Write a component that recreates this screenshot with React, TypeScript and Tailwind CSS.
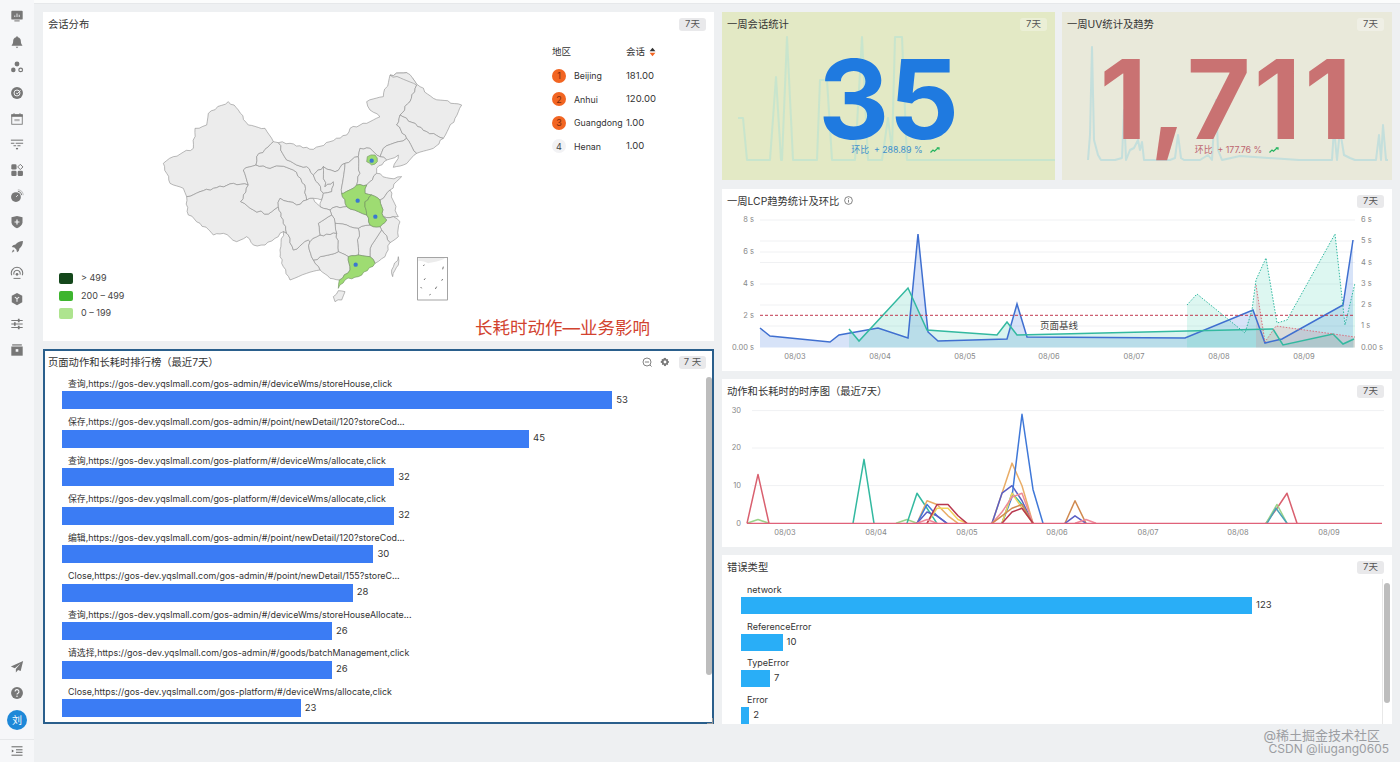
import type { ReactNode } from "react";

const provinces = [
  "40,310 70,290 130,265 135,205 170,195 175,160 235,125 265,150 295,195 345,205 370,245 345,268 320,290 318,315 280,330 295,375 250,370 190,385 150,395 110,410 100,385 60,370 50,340",
  "110,410 150,395 190,385 250,370 295,375 272,425 310,450 355,462 385,440 410,520 400,515 375,535 345,555 310,555 290,530 260,545 220,520 190,525 150,490 115,465",
  "280,330 318,315 360,325 390,318 430,330 465,375 470,420 440,435 415,425 390,415 385,440 355,462 310,450 272,425 295,375",
  "370,245 385,248 410,300 440,315 470,320 490,345 505,370 520,400 515,420 490,415 470,420 465,375 430,330 390,318 360,325 318,315 320,290 345,268",
  "385,248 420,250 490,268 540,245 590,225 600,205 650,190 690,170 660,150 650,125 700,110 720,45 770,38 800,75 780,125 750,165 740,195 770,235 745,245 700,265 690,290 660,265 630,265 625,290 585,310 555,335 520,320 490,345 470,320 440,315 410,300",
  "720,45 770,38 810,80 850,115 935,135 915,175 880,235 830,215 750,165 780,125 800,75",
  "750,165 830,215 880,235 850,265 800,280 770,235 740,195",
  "770,235 800,280 760,315 730,322 745,285 710,300 690,290 700,265 745,245",
  "490,345 520,320 525,380 550,365 545,395 520,400 505,370",
  "520,320 555,335 585,310 575,400 590,440 560,440 540,450 510,440 515,420 520,400 545,395 550,365 525,380",
  "585,310 625,290 630,340 620,375 580,400 575,400",
  "625,290 630,265 660,265 690,290 710,300 680,325 680,340 650,375 620,375 630,340",
  "650,375 680,340 720,355 755,350 720,390 700,415 690,420 665,405 645,400",
  "700,415 720,390 745,470 730,470 700,470 690,420",
  "700,470 730,470 750,485 745,530 720,548 695,510 690,500 710,480",
  "695,510 720,548 705,590 675,610 660,590 665,555",
  "625,505 660,495 690,500 695,510 665,555 660,590 625,585",
  "540,450 560,440 590,440 625,455 650,465 660,495 625,505 590,495 555,490 545,465",
  "555,490 590,495 625,505 625,585 595,590 565,575 560,520",
  "490,600 565,575 595,590 600,630 568,660 540,655 510,630",
  "550,710 565,692 585,695 575,720 555,725",
  "400,515 410,520 415,525 430,570 475,540 480,545 478,570 490,600 510,630 470,640 445,650 420,660 395,610 390,570",
  "480,545 510,525 560,520 565,575 490,600 478,570",
  "505,490 545,465 555,490 560,520 510,525",
  "385,440 390,415 415,425 440,435 470,420 490,415 510,440 540,450 545,465 505,490 510,525 480,545 475,540 430,570 415,525 410,520",
  "745,590 725,630 728,650 745,615",
];

const greenProvinces = [
  "652,290 675,285 682,305 665,315 650,305",
  "620,375 650,375 645,400 665,405 645,425 645,440 650,465 625,455 590,440 575,400 580,400",
  "665,405 690,420 700,470 710,480 690,500 660,495 650,465 645,440 645,425",
  "595,590 625,585 660,590 675,610 625,650 585,660 565,685 568,660 600,630",
];

// rough up the straight edges; same noise on both sides of a shared border
function wiggle(points: string) {
  const pts = points.split(" ").map((p) => p.split(",").map(Number));
  const out: string[] = [];
  pts.forEach((p, i) => {
    const q = pts[(i + 1) % pts.length];
    const swapped = p[0] > q[0] || (p[0] === q[0] && p[1] > q[1]);
    const [a, b] = swapped ? [q, p] : [p, q];
    const dx = b[0] - a[0];
    const dy = b[1] - a[1];
    const len = Math.hypot(dx, dy);
    const n = Math.max(1, Math.round(len / 11));
    const mids: string[] = [];
    for (let k = 1; k < n; k++) {
      const noise = Math.sin(a[0] * 12.9 + a[1] * 78.2 + b[0] * 3.7 + k * 37.7) * 43758.5;
      const off = (noise - Math.floor(noise) - 0.5) * 7;
      const t = k / n;
      mids.push(`${(a[0] + dx * t - (dy / len) * off).toFixed(1)},${(a[1] + dy * t + (dx / len) * off).toFixed(1)}`);
    }
    out.push(`${p[0]},${p[1]}`, ...(swapped ? mids.reverse() : mids));
  });
  return out.join(" ");
}

const rankRows = [
  { name: "Beijing", value: "181.00" },
  { name: "Anhui", value: "120.00" },
  { name: "Guangdong", value: "1.00" },
  { name: "Henan", value: "1.00" },
];

const actionRows = [
  { label: "查询,https://gos-dev.yqslmall.com/gos-admin/#/deviceWms/storeHouse,click", value: 53 },
  { label: "保存,https://gos-dev.yqslmall.com/gos-admin/#/point/newDetail/120?storeCod...", value: 45 },
  { label: "查询,https://gos-dev.yqslmall.com/gos-platform/#/deviceWms/allocate,click", value: 32 },
  { label: "保存,https://gos-dev.yqslmall.com/gos-platform/#/deviceWms/allocate,click", value: 32 },
  { label: "编辑,https://gos-dev.yqslmall.com/gos-admin/#/point/newDetail/120?storeCod...", value: 30 },
  { label: "Close,https://gos-dev.yqslmall.com/gos-admin/#/point/newDetail/155?storeC...", value: 28 },
  { label: "查询,https://gos-dev.yqslmall.com/gos-admin/#/deviceWms/storeHouseAllocate...", value: 26 },
  { label: "请选择,https://gos-dev.yqslmall.com/gos-admin/#/goods/batchManagement,click", value: 26 },
  { label: "Close,https://gos-dev.yqslmall.com/gos-platform/#/deviceWms/allocate,click", value: 23 },
];

const errorRows = [
  { label: "network", value: 123 },
  { label: "ReferenceError", value: 10 },
  { label: "TypeError", value: 7 },
  { label: "Error", value: 2 },
];

const sessionSpark =
  "738,118 743,118 747,160 770,160 776,77 781,160 782,160 787,37 793,160 817,160 820,80 827,80 832,160 855,160 862,37 868,160 882,160 888,118 892,150 895,37 902,37 907,160 1055,160";
const uvSpark =
  "1088,160 1090,135 1092,47 1094,140 1098,155 1101,160 1115,160 1122,158 1124,110 1126,160 1130,150 1134,148 1138,140 1140,150 1142,142 1144,160 1170,160 1175,158 1178,135 1181,158 1184,160 1200,160 1208,155 1212,160 1214,125 1216,100 1218,150 1222,160 1240,156 1299,160 1332,160 1334,128 1337,160 1340,130 1344,155 1350,158 1355,160 1376,160 1379,135 1381,160 1383,125 1386,160 1388,160";

const lcpBlue = "760,328 770,336 830,342 839,335 878,328 908,338 918,234 928,332 938,341 1007,339 1017,304 1027,337 1185,338 1253,310 1265,343 1282,339 1343,305 1353,240";
const lcpTeal = "849,329 859,341 908,288 927,330 997,335 1007,322 1017,335 1060,334 1273,329 1283,345 1333,334 1343,344 1354,339";
const lcpTealDot = "1187,305 1197,294 1245,333 1252,310 1256,280 1266,258 1277,323 1287,320 1335,234 1345,325 1355,283";
const lcpRedDot = "1256,285 1265,342 1276,326 1355,337";

const seqSeries: { color: string; points: [number, number][] }[] = [
  { color: "#9ad48a", points: [[747, 0], [758, 1], [769, 0]] },
  { color: "#d9606f", points: [[747, 0], [758, 13], [769, 0]] },
  { color: "#33b9a0", points: [[853, 0], [864, 17], [874, 0]] },
  { color: "#9ad48a", points: [[896, 0], [907, 1], [917, 0]] },
  { color: "#33b9a0", points: [[907, 0], [917, 8], [927, 4], [937, 0]] },
  { color: "#e9ad67", points: [[917, 0], [927, 6], [937, 5], [948, 2], [958, 0]] },
  { color: "#3f78d8", points: [[917, 0], [927, 5], [937, 2], [947, 0]] },
  { color: "#5a5fc4", points: [[917, 0], [927, 3], [937, 2], [947, 0]] },
  { color: "#f2d35c", points: [[927, 0], [937, 4], [948, 4], [958, 1], [967, 0]] },
  { color: "#b8384f", points: [[927, 0], [937, 5], [948, 5], [958, 2], [967, 0]] },
  { color: "#ee8a9a", points: [[917, 0], [927, 1], [937, 0]] },
  { color: "#e9ad67", points: [[992, 0], [1002, 8], [1012, 16], [1022, 10], [1033, 0]] },
  { color: "#5a5fc4", points: [[992, 0], [1002, 8], [1012, 10], [1022, 6], [1033, 0]] },
  { color: "#3f78d8", points: [[1002, 0], [1012, 7], [1022, 29], [1033, 9], [1043, 0]] },
  { color: "#33b9a0", points: [[1002, 0], [1012, 8], [1022, 5], [1033, 0]] },
  { color: "#f2d35c", points: [[1002, 0], [1012, 8], [1022, 4], [1033, 0]] },
  { color: "#ee8a9a", points: [[992, 0], [1002, 3], [1012, 7], [1022, 8], [1033, 0]] },
  { color: "#d08a50", points: [[992, 0], [1002, 2], [1012, 4], [1022, 5], [1033, 0]] },
  { color: "#b8384f", points: [[1002, 0], [1012, 3], [1022, 4], [1033, 0]] },
  { color: "#d08a50", points: [[1065, 0], [1075, 6], [1086, 0]] },
  { color: "#5a5fc4", points: [[1065, 0], [1075, 2], [1086, 0]] },
  { color: "#ee8a9a", points: [[1075, 0], [1086, 1], [1096, 0]] },
  { color: "#d9606f", points: [[1266, 0], [1277, 4], [1287, 8], [1297, 0]] },
  { color: "#9ad48a", points: [[1266, 0], [1277, 5], [1287, 0]] },
  { color: "#4aa3b8", points: [[1267, 0], [1276, 4], [1287, 0]] },
];

function SideIcon({ children }: { children: ReactNode }) {
  return (
    <svg viewBox="0 0 16 16" className="h-[14px] w-[14px] text-[#777]" fill="currentColor">
      {children}
    </svg>
  );
}

const topIcons = [
  <>
    <rect x="1.5" y="2" width="13" height="10" rx="1" />
    <rect x="5" y="13" width="6" height="1.2" />
    <path d="M5 9V7.5h1V9zM7.5 9V5h1v4zM10 9V6.5h1V9z" fill="#f4f5f7" />
  </>,
  <path d="M8 1.5a1 1 0 0 1 1 1c2.3.5 3.4 2.3 3.4 4.6 0 2 .6 3.4 1.6 4.4v.8H2v-.8c1-1 1.6-2.4 1.6-4.4C3.6 4.8 4.7 3 7 2.5a1 1 0 0 1 1-1zM6.5 13.500h3L8 15z" />,
  <>
    <circle cx="8" cy="4.5" r="2.8" />
    <circle cx="3.8" cy="11.3" r="2.6" />
    <circle cx="12.2" cy="11.3" r="2.1" fill="none" stroke="currentColor" strokeWidth="1.4" />
  </>,
  <>
    <circle cx="8" cy="8" r="6.8" />
    <circle cx="8" cy="8" r="3.4" fill="none" stroke="#f4f5f7" strokeWidth="1.1" />
    <path d="M7 8l1.2 1L12 5" fill="none" stroke="#f4f5f7" strokeWidth="1.1" />
  </>,
  <>
    <path d="M1.5 3h13v2.5h-13z" />
    <path d="M4 1.500h1.200V3H4zM10.800 1.500H12V3h-1.200z" />
    <rect x="2" y="3" width="12" height="11" fill="none" stroke="currentColor" strokeWidth="1" />
    <rect x="5" y="8" width="6" height="2.5" opacity=".5" />
  </>,
  <>
    <rect x="1" y="3" width="14" height="1.2" />
    <path d="M1 6.500h4v1.100H1zM6.500 6.500H15v1.100H6.500z" />
    <path d="M4 9.500h3v1.100H4zM8.500 9.500H12v1.100H8.500z" />
    <rect x="6.800" y="12.5" width="2.4" height="1.6" />
  </>,
  <>
    <rect x="1.5" y="1.5" width="6" height="6" rx="1.5" />
    <rect x="1.5" y="8.8" width="6" height="6" rx="1.5" />
    <rect x="8.8" y="8.8" width="6" height="6" rx="1.5" />
    <path d="M11.8 1.500l3 3-3 3-3-3z" fill="none" stroke="currentColor" strokeWidth="1.1" />
  </>,
  <>
    <circle cx="6.8" cy="9.2" r="5.6" />
    <path d="M7 9l2-2" stroke="#f4f5f7" strokeWidth="1" />
    <path d="M9 2.500a5 5 0 0 1 4.500 4.500" fill="none" stroke="currentColor" strokeWidth="1.100" />
    <path d="M9 .8a6.800 6.800 0 0 1 6.200 6.200" fill="none" stroke="currentColor" strokeWidth=".8" opacity=".6" />
  </>,
  <>
    <path d="M8 1l6.300 1.700v5.600c0 3.200-2.900 5.500-6.300 6.700-3.400-1.200-6.300-3.500-6.300-6.700V2.700z" />
    <path d="M7.300 5.200h1.400v2.100h2.100v1.400H8.700v2.100H7.300V8.700H5.200V7.300h2.100z" fill="#f4f5f7" />
  </>,
  <>
    <path d="M14.800 1.200c-3.600.1-6.400 1.300-8.500 4L3.500 6 2 8l3 .6 2.400 2.400.6 3 2-1.500.8-2.800c2.700-2.100 3.900-4.900 4-8.500z" />
    <path d="M3.500 10.800l1.700 1.700L2 14.500z" />
  </>,
  <>
    <path d="M2 10.500a6.500 6.500 0 1 1 12 0" fill="none" stroke="currentColor" strokeWidth="1.2" />
    <path d="M4.500 9.800a3.700 3.700 0 1 1 7 0" fill="none" stroke="currentColor" strokeWidth="1.2" />
    <circle cx="8" cy="9.5" r="1.5" />
    <path d="M4 13.600h8v1.100H4z" />
  </>,
  <>
    <path d="M8 1l6 3.300v7.400L8 15l-6-3.300V4.300z" />
    <path d="M5.500 5.800L8 7.500l2.500-1.700M8 7.500V11" fill="none" stroke="#f4f5f7" strokeWidth="1.2" />
  </>,
  <>
    <path d="M1.500 3.500h13v1.100h-13zM1.500 7.500h13v1.100h-13zM1.500 11.500h13v1.100h-13z" />
    <rect x="9" y="2" width="2" height="4" />
    <rect x="4.5" y="6" width="2" height="4" />
    <rect x="9" y="10" width="2" height="4" />
  </>,
  <>
    <rect x="2.5" y="1.5" width="11" height="1.4" />
    <path d="M1.500 4h13v10.500h-13z" />
    <rect x="6.5" y="7" width="3" height="3" fill="#f4f5f7" />
  </>,
];

function TimeTag({ label = "7天", className = "bg-[#e9e9eb]" }: { label?: string; className?: string }) {
  return (
    <span className={`flex h-[13px] w-[27px] items-center justify-center rounded-[3px] text-[9.5px] leading-none text-[#555] ${className}`}>
      {label}
    </span>
  );
}

function CardHeader({
  title,
  extra,
  tag,
  tagClass,
  boxed,
}: {
  title: ReactNode;
  extra?: ReactNode;
  tag?: string;
  tagClass?: string;
  boxed?: boolean;
}) {
  return (
    <div className={`flex shrink-0 items-center justify-between ${boxed ? "h-[22px] pl-[3px] pr-[6px]" : "h-[24px] pl-[5px] pr-[8px]"}`}>
      <span className="text-[10.3px] leading-none text-[#333]">{title}</span>
      <div className="flex items-center gap-[5px]">
        {extra}
        <TimeTag label={tag} className={tagClass} />
      </div>
    </div>
  );
}

function Scrollbar({ height, className }: { height: number; className?: string }) {
  return (
    <div className={`w-[6px] shrink-0 ${className ?? ""}`}>
      <div className="w-[6px] rounded-[3px] bg-[#bdbdbd]" style={{ height }} />
    </div>
  );
}

function TrendIcon() {
  return (
    <svg viewBox="0 0 10 6" className="h-[6px] w-[10px]" fill="none" stroke="#22b35e" strokeWidth="1.2">
      <path d="M.5 5.500L3 3l1.500 1.200L8 1M6.800.8H9v2" />
    </svg>
  );
}

function StatCard({
  title,
  value,
  ratio,
  spark,
  bg,
  numClass,
  ratioClass,
  viewBox,
  sparkColor,
}: {
  title: string;
  value: string;
  ratio: string;
  spark: string;
  bg: string;
  numClass: string;
  ratioClass: string;
  viewBox: string;
  sparkColor: string;
}) {
  return (
    <div className={`relative flex flex-col overflow-hidden ${bg}`}>
      <svg viewBox={viewBox} className="absolute inset-0 h-full w-full" fill="none">
        <polyline points={spark} stroke={sparkColor} strokeWidth="2" strokeLinejoin="round" opacity=".75" />
      </svg>
      <div className="relative flex h-full flex-col">
        <CardHeader title={title} tagClass="bg-white/30" />
        <div className={`mt-[18px] h-[90px] text-center text-[110px] font-bold leading-[90px] ${numClass}`}>{value}</div>
        <div className={`mt-[1px] flex items-center justify-center gap-[7px] text-[8.8px] leading-[10px] ${ratioClass}`}>
          <span>环比&nbsp;&nbsp;+ {ratio} %</span>
          <TrendIcon />
        </div>
      </div>
    </div>
  );
}

function AxisText({ x, y, children, anchor = "middle" }: { x: number; y: number; children: ReactNode; anchor?: "start" | "middle" | "end" }) {
  return (
    <text x={x} y={y} textAnchor={anchor} fontSize="7.5" fill="#888" dominantBaseline="middle">
      {children}
    </text>
  );
}

function LcpChart() {
  const grid = [220, 241, 252, 262.5, 284, 305, 326];
  const baseY = 347.5;
  return (
    <svg viewBox="722 213 670 158" className="block h-[158px] w-[670px]" fill="none">
      {grid.map((y) => (
        <line key={y} x1="760" x2="1355" y1={y} y2={y} stroke="#f0f1f3" strokeWidth="1" />
      ))}
      <polygon points={`760,${baseY} ${lcpBlue} 1353,${baseY}`} fill="#4a7fe0" opacity=".22" />
      <polygon points={`849,${baseY} ${lcpTeal} 1354,${baseY}`} fill="#40c8b0" opacity=".2" />
      <polygon points={`1187,${baseY} ${lcpTealDot} 1355,${baseY}`} fill="#40d0b0" opacity=".18" />
      <polygon points={`1256,${baseY} ${lcpRedDot} 1355,${baseY}`} fill="#d9808a" opacity=".22" />
      <polyline points={lcpBlue} stroke="#3f6fd0" strokeWidth="1.5" />
      <polyline points={lcpTeal} stroke="#33b9a0" strokeWidth="1.5" />
      <polyline points={lcpTealDot} stroke="#2fb8a0" strokeWidth="1" strokeDasharray="1.5 1.5" />
      <polyline points={lcpRedDot} stroke="#d9707f" strokeWidth="1" strokeDasharray="1.5 1.5" />
      <line x1="760" x2="1355" y1="315.3" y2="315.3" stroke="#c0394f" strokeWidth="1" strokeDasharray="3 2" />
      <text x="1040" y="326" fontSize="9.5" fill="#444" dominantBaseline="middle">
        页面基线
      </text>
      {[
        ["8 s", 220],
        ["6 s", 252],
        ["4 s", 284],
        ["2 s", 315.5],
        ["0.00 s", 347.5],
      ].map(([t, y]) => (
        <AxisText key={t} x={754} y={y as number} anchor="end">
          {t}
        </AxisText>
      ))}
      {[
        ["6 s", 220],
        ["5 s", 241],
        ["4 s", 262.5],
        ["3 s", 284],
        ["2 s", 305],
        ["1 s", 326],
        ["0.00 s", 347.5],
      ].map(([t, y]) => (
        <AxisText key={t} x={1361} y={y as number} anchor="start">
          {t}
        </AxisText>
      ))}
      {[
        ["08/03", 795],
        ["08/04", 880],
        ["08/05", 965],
        ["08/06", 1049],
        ["08/07", 1134],
        ["08/08", 1219],
        ["08/09", 1304],
      ].map(([t, x]) => (
        <AxisText key={t} x={x as number} y={357}>
          {t}
        </AxisText>
      ))}
    </svg>
  );
}

function SeqChart() {
  const zero = 523.3;
  const toPoints = (pts: [number, number][]) => pts.map(([x, v]) => `${x},${zero - v * 3.76}`).join(" ");
  return (
    <svg viewBox="722 403 670 144" className="block h-[144px] w-[670px]" fill="none">
      {[410.6, 448, 485.6].map((y) => (
        <line key={y} x1="752" x2="1384" y1={y} y2={y} stroke="#f0f1f3" />
      ))}
      {seqSeries.map((s, i) => (
        <polyline key={i} points={toPoints(s.points)} stroke={s.color} strokeWidth="1.5" strokeLinejoin="round" />
      ))}
      <line x1="747" x2="1382" y1={zero} y2={zero} stroke="#e0627a" strokeWidth="1.2" />
      {[
        ["30", 410.6],
        ["20", 448],
        ["10", 485.6],
        ["0", 523.5],
      ].map(([t, y]) => (
        <AxisText key={t} x={741} y={y as number} anchor="end">
          {t}
        </AxisText>
      ))}
      {[
        ["08/03", 785],
        ["08/04", 876],
        ["08/05", 967],
        ["08/06", 1057],
        ["08/07", 1148],
        ["08/08", 1238],
        ["08/09", 1329],
      ].map(([t, x]) => (
        <AxisText key={t} x={x as number} y={533}>
          {t}
        </AxisText>
      ))}
    </svg>
  );
}

function SessionCard() {
  return (
    <div className="relative flex h-[329px] flex-col bg-white">
      <CardHeader title="会话分布" />
      <div className="flex">
        <svg viewBox="0 0 960 780" className="ml-[107px] mt-[24px] h-[260px] w-[320px] shrink-0">
          {provinces.map((p, i) => (
            <polygon key={i} points={wiggle(p)} fill="#ececec" stroke="#8c8c8c" strokeWidth="1.8" strokeLinejoin="round" />
          ))}
          {greenProvinces.map((p, i) => (
            <polygon key={i} points={wiggle(p)} fill="#9edc72" stroke="#6f8f60" strokeWidth="1.8" strokeLinejoin="round" />
          ))}
          {[
            [665, 302],
            [623, 422],
            [676, 470],
            [617, 614],
          ].map(([cx, cy]) => (
            <circle key={cx} cx={cx} cy={cy} r="6.5" fill="#3b78d0" />
          ))}
          <rect x="803" y="592" width="89" height="128" fill="#fff" stroke="#777" strokeWidth="2" />
          <path d="M805 594h80c-10 10-40 12-50 16-15-6-20-8-30-6z" fill="#ececec" />
          <path d="M820 618l3-4M822 660l4-5M880 620l-2 8M875 662l3-5M860 680l-4 7M815 685l-3-4M838 705l4-2" stroke="#555" strokeWidth="2.5" />
        </svg>
        <div className="ml-[82px] mt-[8px] w-[110px] text-[9.5px] text-[#333]">
          <div className="mb-[4px] flex h-[16px] items-center">
            <span className="w-[74px]">地区</span>
            <span>会话</span>
            <svg viewBox="0 0 8 12" className="ml-[4px] h-[10px] w-[7px]">
              <path d="M4 1l3.5 4h-7z" fill="#333" />
              <path d="M4 11l3.5-4h-7z" fill="#f26522" />
            </svg>
          </div>
          {rankRows.map((row, i) => (
            <div key={row.name} className="flex h-[23.5px] items-center">
              <span
                className={`flex h-[14px] w-[14px] items-center justify-center rounded-full text-[9px] ${
                  i < 3 ? "bg-[#f26522] text-[#7a2a0a]" : "bg-[#f2f2f4] text-[#444]"
                }`}
              >
                {i + 1}
              </span>
              <span className="ml-[8px] w-[52px] whitespace-nowrap text-[8.8px]">{row.name}</span>
              <span>{row.value}</span>
            </div>
          ))}
        </div>
      </div>
      <div className="absolute bottom-[22.5px] left-[16px] flex flex-col gap-[7px] text-[9px] leading-[10.5px] text-[#444]">
        {[
          ["bg-[#14471b]", "> 499"],
          ["bg-[#3eb52f]", "200 – 499"],
          ["bg-[#aee48f]", "0 – 199"],
        ].map(([c, t]) => (
          <div key={t} className="flex items-center gap-[8px]">
            <span className={`h-[10.5px] w-[14px] rounded-[2px] ${c}`} />
            <span>{t}</span>
          </div>
        ))}
      </div>
      <div className="absolute left-[432px] top-[305px] whitespace-nowrap text-[17.5px] leading-[22px] text-[#d2432f]">
        长耗时动作—业务影响
      </div>
    </div>
  );
}

function ActionCard() {
  return (
    <div className="flex h-[375px] flex-col border-2 border-[#2a5f8c] bg-white">
      <CardHeader
        boxed
        title="页面动作和长耗时排行榜（最近7天）"
        tag="7 天"
        extra={
          <div className="mr-[4px] flex items-center gap-[8px] text-[#777]">
            <svg viewBox="0 0 12 12" className="h-[10px] w-[10px]" fill="none" stroke="currentColor" strokeWidth="1.1">
              <circle cx="6" cy="6" r="4.8" />
              <path d="M3.5 6h5M9.500 9.500L11.500 11.500" />
            </svg>
            <svg viewBox="0 0 12 12" className="h-[10px] w-[10px]" fill="currentColor">
              <path d="M6 .8l1.200.6.300 1.300 1.300-.4 1 .9-.4 1.300 1.300.5v1.800l-1.300.5.400 1.300-1 .9-1.300-.4-.3 1.300-1.200.6-1.200-.6-.3-1.300-1.300.4-1-.9.4-1.300L.9 6.800V5l1.300-.5-.4-1.300 1-.9 1.300.4.300-1.300z" />
              <circle cx="6" cy="6" r="1.7" fill="#fff" />
            </svg>
          </div>
        }
      />
      <div className="flex min-h-0 flex-1 pt-[4px]">
        <div className="min-w-0 flex-1 pl-[17px]">
          {actionRows.map((row) => (
            <div key={row.label} className="mb-[6.5px]">
              <div className="flex h-[14px] items-center whitespace-nowrap pl-[6px] text-[8.9px] leading-none text-[#333]">
                {row.label}
              </div>
              <div className="flex items-center gap-[4px]">
                <div className="h-[18px] bg-[#3b7cf4]" style={{ width: row.value * 10.38 }} />
                <span className="text-[9.5px] text-[#333]">{row.value}</span>
              </div>
            </div>
          ))}
        </div>
        <Scrollbar height={298} />
      </div>
    </div>
  );
}

function ErrorCard() {
  return (
    <div className="flex h-[169px] flex-col bg-white">
      <CardHeader title="错误类型" />
      <div className="flex min-h-0 flex-1">
        <div className="min-w-0 flex-1 overflow-hidden pl-[19px] pt-[3px]">
          {errorRows.map((row) => (
            <div key={row.label} className="mb-[4.5px]">
              <div className="flex h-[15px] items-center pl-[6px] text-[9px] leading-none text-[#333]">{row.label}</div>
              <div className="flex items-center gap-[4px]">
                <div className="h-[17px] bg-[#29aef7]" style={{ width: row.value * 4.155 }} />
                <span className="text-[9.5px] text-[#333]">{row.value}</span>
              </div>
            </div>
          ))}
        </div>
        <div className="border-l border-[#e8e8e8] pl-[1px] pt-[4px]">
          <Scrollbar height={120} className="mr-[2px]" />
        </div>
      </div>
    </div>
  );
}

export default function App() {
  return (
    <div className="relative flex h-[762px] w-[1400px] overflow-hidden bg-[#eef0f2] font-[Inter,'Noto_Sans_CJK_SC',sans-serif]">
      <aside className="flex w-[34px] shrink-0 flex-col items-center bg-[#f6f7f9]">
        <div className="flex flex-col items-center gap-[11.7px] pt-[9px]">
          {topIcons.map((icon, i) => (
            <SideIcon key={i}>{icon}</SideIcon>
          ))}
        </div>
        <div className="mt-auto flex flex-col items-center">
          <SideIcon>
            <path d="M15 1L1 7.500l4.500 1.800L12 4 6.700 10.300v4l2.500-3 3 1.200z" />
          </SideIcon>
          <div className="mt-[12px]">
            <SideIcon>
              <circle cx="8" cy="8" r="6.8" />
              <path d="M5.800 6.300a2.200 2.200 0 1 1 3.300 1.900c-.8.400-1.100.8-1.100 1.600" fill="none" stroke="#f4f5f7" strokeWidth="1.3" />
              <circle cx="8" cy="11.8" r=".9" fill="#f4f5f7" />
            </SideIcon>
          </div>
          <div className="mt-[10px] flex h-[20px] w-[20px] items-center justify-center rounded-full bg-[#1e88d8] text-[10px] text-white">
            刘
          </div>
        </div>
        <div className="mt-[9px] flex h-[23px] w-full items-center justify-center border-t border-[#e6e8ea]">
          <svg viewBox="0 0 12 10" className="h-[10px] w-[12px]" fill="none" stroke="#666" strokeWidth="1">
            <path d="M.5 .8h11M5 3.800h6.500M5 6.300h6.500M.5 9.200h11" />
            <path d="M.8 3.500L3 5 .8 6.500z" fill="#666" stroke="none" />
          </svg>
        </div>
      </aside>
      <div className="min-w-0 flex-1">
        <div className="h-[4px] border-b border-[#e6e8ea] bg-[#fbfcfc]" />
        <main className="grid grid-cols-[671px_670px] gap-x-[8px] pl-[9px] pt-[8px]">
          <div className="flex flex-col gap-[8px]">
            <SessionCard />
            <ActionCard />
          </div>
          <div className="flex flex-col">
            <div className="grid h-[168px] grid-cols-[333px_330px] gap-x-[7px]">
              <StatCard
                title="一周会话统计"
                value="35"
                ratio="288.89"
                spark={sessionSpark}
                viewBox="722 12 333 168"
                bg="bg-[#e3e9c5]"
                numClass="tracking-[-0.5px] text-[#1f7ae0]"
                ratioClass="ml-[14px] text-[#3d8fcb]"
                sparkColor="#bfe3cf"
              />
              <StatCard
                title="一周UV统计及趋势"
                value="1,711"
                ratio="177.76"
                spark={uvSpark}
                viewBox="1062 12 330 168"
                bg="bg-[#e9e9da]"
                numClass="tracking-[3px] text-[#c97272]"
                ratioClass="ml-[20px] text-[#bd6670]"
                sparkColor="#b7dbdc"
              />
            </div>
            <div className="mt-[9px] h-[182px] bg-white">
              <CardHeader
                title={
                  <span className="flex items-center gap-[5px]">
                    一周LCP趋势统计及环比
                    <svg viewBox="0 0 10 10" className="h-[9px] w-[9px]" fill="none" stroke="#555" strokeWidth=".8">
                      <circle cx="5" cy="5" r="4.3" />
                      <path d="M5 4.300v3M5 2.500v1" />
                    </svg>
                  </span>
                }
              />
              <LcpChart />
            </div>
            <div className="mt-[8px] h-[168px] bg-white">
              <CardHeader title="动作和长耗时的时序图（最近7天）" />
              <SeqChart />
            </div>
            <div className="mt-[8px]">
              <ErrorCard />
            </div>
          </div>
        </main>
      </div>
      <div className="absolute bottom-[6px] right-[11px] flex flex-col items-end text-[#9c9ea2]">
        <span className="mr-[9px] text-[13px] leading-[14px]">@稀土掘金技术社区</span>
        <span className="text-[12px] leading-[14px]">CSDN @liugang0605</span>
      </div>
      <div className="absolute bottom-[38px] left-[707px] h-[6px] w-[6px] border-b border-r border-[#999]" />
    </div>
  );
}
